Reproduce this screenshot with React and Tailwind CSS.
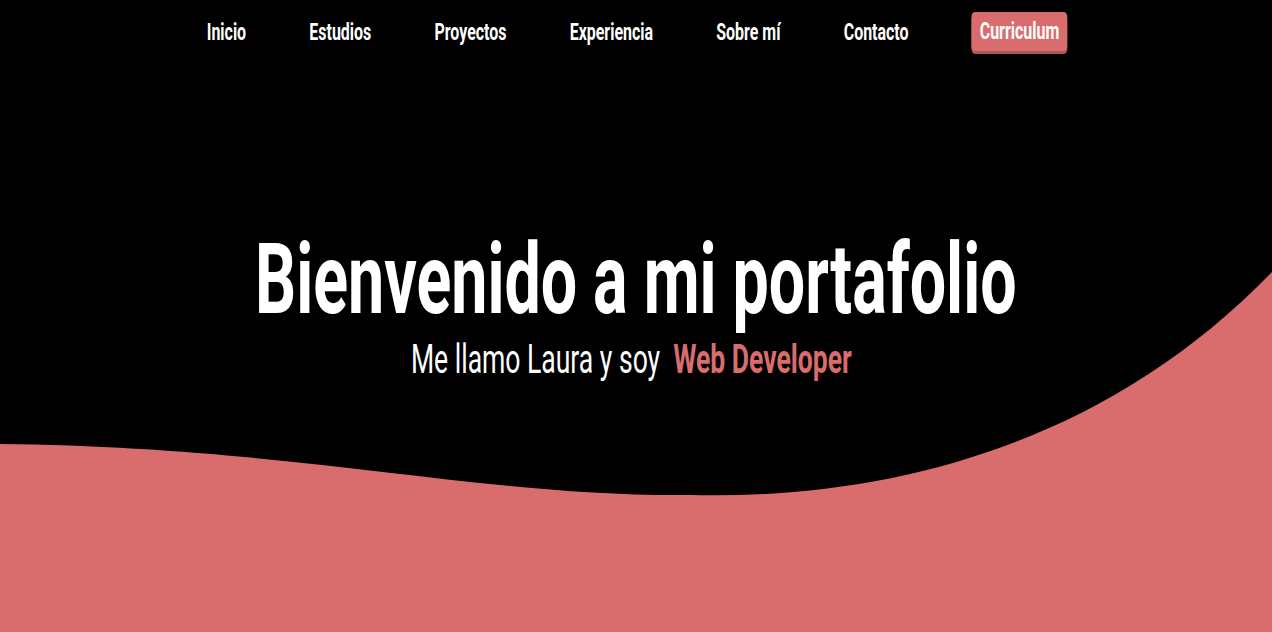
export default function App() {
  const items = ["Inicio", "Estudios", "Proyectos", "Experiencia", "Sobre mí", "Contacto"];
  return (
    <div className="relative h-[632px] w-full overflow-hidden bg-black" style={{ fontFamily: "Roboto, 'Liberation Sans', sans-serif" }}>
      <svg className="absolute inset-0 h-full w-full" viewBox="0 0 1272 632" preserveAspectRatio="none">
        <path d="M0,444 C300,447 480,497 690,495 C880,500 1100,450 1272,272 L1272,632 L0,632 Z" fill="#d96c6c" />
      </svg>
      <div className="relative flex flex-col items-center">
        <nav className="flex h-[63px] w-full items-center justify-center pl-[2px]">
          <div className="flex origin-center scale-x-[0.665] items-center gap-[95px] whitespace-nowrap">
            {items.map((t) => (
              <span key={t} className="text-[24px] font-bold leading-none text-white">{t}</span>
            ))}
            <span className="rounded-[5px] bg-[#d96c6c] px-[12px] pb-[8px] pt-[7px] text-[24px] font-bold leading-none text-white shadow-[0_3px_0_#b25656]">Curriculum</span>
          </div>
        </nav>
        <div className="mt-[172px] flex w-full justify-center">
          <h1 className="origin-center scale-x-[0.651] whitespace-nowrap text-[99px] font-bold leading-[88px] text-white">Bienvenido a mi portafolio</h1>
        </div>
        <div className="mt-[16px] flex w-full justify-center">
          <p className="origin-center scale-x-[0.647] whitespace-nowrap pr-[15px] text-[41px] leading-none text-white">
            Me llamo Laura y soy <span className="ml-[10px] font-bold text-[#d96c6c]">Web Developer</span>
          </p>
        </div>
      </div>
    </div>
  );
}
